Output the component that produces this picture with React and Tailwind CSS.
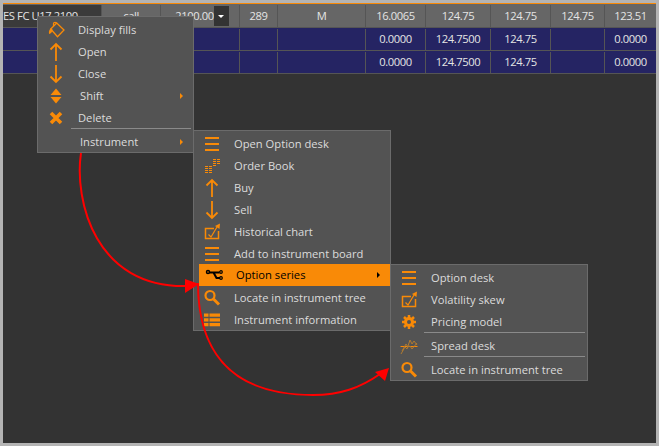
const ORANGE = "#f98a07";

const columns = "grid-cols-[99px_59px_79px_38px_88px_60px_65px_60px_54px_51px]";

function Cell({ children, className = "" }) {
  return (
    <div className={`flex items-center justify-center border-r border-[#555] last:border-r-0 ${className}`}>
      {children}
    </div>
  );
}

function DataRow() {
  return (
    <div className={`grid h-[23px] border-b border-[#555] bg-[#252463] pt-px text-[#e4e4e4] ${columns}`}>
      <Cell />
      <Cell />
      <Cell />
      <Cell />
      <Cell />
      <Cell>0.0000</Cell>
      <Cell>124.7500</Cell>
      <Cell>124.75</Cell>
      <Cell />
      <Cell>0.0000</Cell>
    </div>
  );
}

function Icon({ children }) {
  return (
    <svg viewBox="0 0 20 20" width="20" height="20" fill="none" stroke={ORANGE} strokeWidth="2">
      {children}
    </svg>
  );
}

const Bars = () => (
  <Icon>
    <path d="M3 4h14M3 10h14M3 16h14" />
  </Icon>
);
const ArrowUp = () => (
  <Icon>
    <path d="M10 19V2M4.5 7.5L10 2l5.5 5.5" strokeWidth="1.8" />
  </Icon>
);
const ArrowDown = () => (
  <Icon>
    <path d="M10 1v17M4.5 12.5L10 18l5.5-5.5" strokeWidth="1.8" />
  </Icon>
);
const Magnifier = () => (
  <Icon>
    <circle cx="8" cy="7.5" r="4.5" strokeWidth="2.2" />
    <path d="M11.5 11l5.5 5.5" strokeWidth="3" />
  </Icon>
);
const Chart = () => (
  <Icon>
    <path d="M12 6.5H3.500v10h13V9" strokeWidth="1.5" />
    <path d="M6.5 12.5l2.5 2.5 6-10" strokeWidth="1.2" />
    <path d="M13 4L18 1.5 17.5 7z" fill={ORANGE} stroke="none" />
  </Icon>
);
const Fills = () => (
  <Icon>
    <path d="M10.7 3L18 10l-6.5 6.7L4.700 9z" strokeWidth="1.3" />
    <path d="M7.5 6V3.5c0-1.5 3-1.5 3 0" strokeWidth="1.2" />
    <path d="M5 8.3c-1.5 1-2.5 3-2 5.700 2-.5 3.500-2 3.500-4.500z" fill={ORANGE} stroke="none" />
  </Icon>
);
const Shift = () => (
  <Icon>
    <path d="M10 2.5L15.5 9h-11zM4.5 11h11L10 17.500z" fill={ORANGE} stroke="none" />
  </Icon>
);
const Cross = () => (
  <Icon>
    <path d="M5 5l10 10M15 5L5 15" strokeWidth="3.6" />
  </Icon>
);
const OrderBook = () => (
  <Icon>
    <path
      d="M3 10.5h3M7 10.5h3M3 12.5h3M7 12.5h3M3 14.5h3M7 14.5h3M3 16.5h3M7 16.5h3M11 3.5h3M15 3.5h3M11 5.5h3M15 5.5h3M11 7.5h3M15 7.5h3M11 9.5h3"
      strokeWidth="1"
    />
  </Icon>
);
const OptionSeries = () => (
  <Icon>
    <circle cx="4" cy="7" r="1.5" stroke="#000" strokeWidth="1.5" />
    <path d="M5.5 7.5h4l3 5.5h3.5M9.5 7.5h6" stroke="#000" strokeWidth="2" />
    <circle cx="17" cy="7" r="1.3" stroke="#000" strokeWidth="1.2" />
    <circle cx="17" cy="13" r="1.3" stroke="#000" strokeWidth="1.2" />
  </Icon>
);
const InfoList = () => (
  <Icon>
    <path d="M2 3.5h4.5v3.2H2zM2 8.2h4.5v3.3H2zM2 13h4.5v3.3H2zM7.5 3.5H18v3.2H7.5zM7.5 8.2H18v3.3H7.5zM7.5 13H18v3.3H7.5z" fill={ORANGE} stroke="none" />
  </Icon>
);
const Gear = () => (
  <Icon>
    <circle cx="10" cy="10" r="3.5" strokeWidth="3" />
    <path d="M10 3v3M10 14v3M3 10h3M14 10h3M5 5l2 2M13 13l2 2M15 5l-2 2M7 13l-2 2" strokeWidth="2.5" />
  </Icon>
);
const Spread = () => (
  <Icon>
    <path d="M1.500 10.500h17" strokeWidth="1" />
    <path d="M2 18l4-7 2 2 3-9 2 4 2-3 3 4" stroke="#b07a30" strokeWidth="1" />
    <path d="M3 15l4-7 2 3 2-1 2 3 5-6" stroke="#b07a30" strokeWidth="1" />
  </Icon>
);

function MenuItem({ icon, label, submenu, active, indent, className = "" }) {
  return (
    <div className={`flex h-[22px] items-center ${active ? "-mt-px mb-px ml-[5px] bg-[#f98a07] text-black" : ""} ${className}`}>
      <span className={`flex shrink-0 justify-center ${active ? "w-[35px] pr-[6px]" : "w-[40px] pr-[4px]"}`}>{icon}</span>
      <span className={`flex-1 ${indent ? "pl-[2px]" : ""}`}>{label}</span>
      {submenu ? (
        <span
          className={`mr-[10px] h-0 w-0 border-y-[3px] border-l-[3px] border-y-transparent ${
            active ? "border-l-black" : "border-l-[#f98a07]"
          }`}
        />
      ) : null}
    </div>
  );
}

const Divider = () => <div className="-mt-px mr-[2px] mb-[2px] ml-[33px] h-px bg-[#8a8a8a]" />;

function Arrows() {
  return (
    <svg viewBox="0 0 659 446" className="pointer-events-none absolute inset-0 h-full w-full" fill="none" stroke="#f00" strokeWidth="2">
      <path d="M81 153C74 200 95 289 188 286" />
      <path d="M198 283C198 345 225 395 313 395C340 395 360 388 380 374" />
      <path d="M185 279l14 5-14 9z" fill="#f00" stroke="none" />
      <path d="M375 372l14-4-4 13z" fill="#f00" stroke="none" />
    </svg>
  );
}

export default function App() {
  return (
    <div
      className="relative h-[446px] w-[659px] overflow-hidden bg-[#b4b4b4] p-[3px] text-[11.2px] text-[#dcdcdc]"
      style={{ fontFamily: '"Open Sans", sans-serif' }}
    >
      <div className="h-full border-t border-[#f98a07] bg-[#333333] tracking-[-0.4px]">
        <div className={`grid h-[24px] border-b border-[#555] bg-[#666666] pt-px text-[#e4e4e4] ${columns}`}>
          <Cell className="justify-start bg-[#3a3a3a]">ES FC U17 2100</Cell>
          <Cell>call</Cell>
          <Cell className="justify-between pr-px pl-[5px]">
            <span>2100.00</span>
            <span className="flex h-[20px] w-[15px] items-center justify-center bg-[#333]">
              <span className="h-0 w-0 border-x-[3px] border-t-[3px] border-x-transparent border-t-white" />
            </span>
          </Cell>
          <Cell>289</Cell>
          <Cell>M</Cell>
          <Cell>16.0065</Cell>
          <Cell>124.75</Cell>
          <Cell>124.75</Cell>
          <Cell>124.75</Cell>
          <Cell>123.51</Cell>
        </div>
        <DataRow />
        <DataRow />
      </div>

      <div className="absolute top-[16px] left-[37px] w-[157px] border border-[#6b6b6b] bg-[#535353] pt-[2px]">
        <MenuItem icon={<Fills />} label="Display fills" />
        <MenuItem icon={<ArrowUp />} label="Open" />
        <MenuItem icon={<ArrowDown />} label="Close" />
        <MenuItem icon={<Shift />} label="Shift" submenu indent />
        <MenuItem icon={<Cross />} label="Delete" />
        <Divider />
        <MenuItem label="Instrument" submenu indent className="-mb-px" />
      </div>

      <div className="absolute top-[130px] left-[193px] w-[198px] border border-[#6b6b6b] bg-[#535353] pt-[2px]">
        <MenuItem icon={<Bars />} label="Open Option desk" />
        <MenuItem icon={<OrderBook />} label="Order Book" />
        <MenuItem icon={<ArrowUp />} label="Buy" />
        <MenuItem icon={<ArrowDown />} label="Sell" />
        <MenuItem icon={<Chart />} label="Historical chart" />
        <MenuItem icon={<Bars />} label="Add to instrument board" />
        <MenuItem icon={<OptionSeries />} label="Option series" submenu active indent />
        <MenuItem icon={<Magnifier />} label="Locate in instrument tree" />
        <MenuItem icon={<InfoList />} label="Instrument information" className="-mb-px" />
      </div>

      <div className="absolute top-[264px] left-[390px] w-[198px] border border-[#6b6b6b] bg-[#535353] pt-[2px]">
        <MenuItem icon={<Bars />} label="Option desk" />
        <MenuItem icon={<Chart />} label="Volatility skew" />
        <MenuItem icon={<Gear />} label="Pricing model" />
        <Divider />
        <MenuItem icon={<Spread />} label="Spread desk" />
        <Divider />
        <MenuItem icon={<Magnifier />} label="Locate in instrument tree" className="-mb-px" />
      </div>

      <Arrows />
    </div>
  );
}
